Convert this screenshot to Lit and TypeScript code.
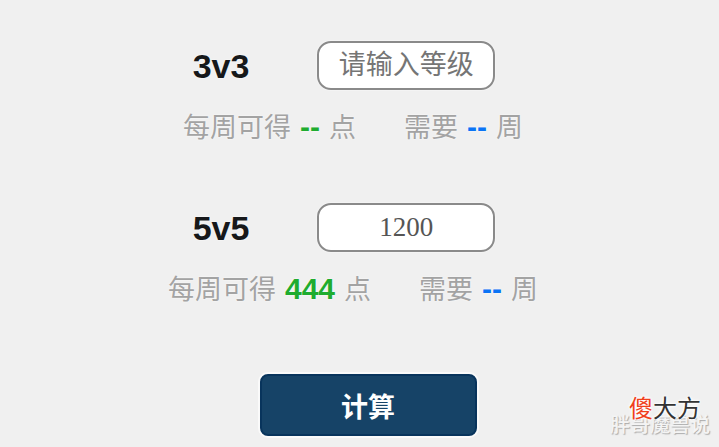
import { LitElement, html, css } from "lit";
import { customElement, property, state } from "lit/decorators.js";

@customElement("bracket-form")
class BracketForm extends LitElement {
  @property() name = "";
  @property() rating = "";
  @property() points = "--";
  @property() weeks = "--";

  static styles = css`
    :host {
      display: block;
    }
    .field {
      display: flex;
      justify-content: center;
      align-items: center;
      gap: 68px;
      padding-right: 18px;
    }
    .name {
      font-size: 34px;
      line-height: 48px;
      font-weight: 700;
      color: #16181a;
      text-shadow: 0 0 2px #fff;
    }
    .rating {
      box-sizing: border-box;
      width: 178px;
      height: 49px;
      padding: 0 8px;
      border: 2px solid #8a8a8a;
      border-radius: 14px;
      background: #fff;
      box-shadow: 0 0 2px #fff;
      color: #555;
      text-align: center;
      font-family: "Liberation Serif", "Noto Sans CJK SC", serif;
      font-size: 27px;
      outline: none;
    }
    .rating::placeholder {
      color: #757575;
      opacity: 1;
    }
    .result {
      display: flex;
      justify-content: center;
      gap: 48px;
      margin: 17px 0 0;
      font-size: 27px;
      line-height: 40px;
      color: #a3a3a3;
      text-shadow: 0 0 2px #fff;
    }
    .item {
      display: flex;
      align-items: baseline;
      gap: 9px;
    }
    .value {
      font-size: 30px;
      font-weight: 700;
    }
    .points {
      color: #1fac2f;
    }
    .weeks {
      color: #0b74f5;
    }
  `;

  render() {
    return html`
      <div class="field">
        <label class="name" for="rating">${this.name}</label>
        <input class="rating" id="rating" type="text" inputmode="numeric" placeholder="请输入等级" .value=${this.rating} />
      </div>
      <p class="result">
        <span class="item">每周可得<b class="value points">${this.points}</b>点</span>
        <span class="item">需要<b class="value weeks">${this.weeks}</b>周</span>
      </p>
    `;
  }
}

@customElement("app-root")
class AppRoot extends LitElement {
  @state() brackets = [
    { name: "3v3", rating: "", points: "--", weeks: "--" },
    { name: "5v5", rating: "1200", points: "444", weeks: "--" },
  ];

  static styles = css`
    :host {
      display: block;
      position: relative;
      box-sizing: border-box;
      min-height: 100vh;
      background: #f0f0f0;
      font-family: "Liberation Sans", "Noto Sans CJK SC", sans-serif;
    }
    .calculator {
      display: flex;
      flex-direction: column;
      gap: 55px;
      padding: 41px 13px 11px 0;
    }
    .submit {
      align-self: center;
      box-sizing: border-box;
      width: 217px;
      height: 62px;
      margin: 9px 0 0 30px;
      border: 2px solid #08345c;
      border-radius: 8px;
      background: #164367;
      box-shadow: 0 0 0 2px #fafafa;
      color: #fff;
      font: inherit;
      font-size: 27px;
      font-weight: 700;
    }
    .marks {
      position: absolute;
      right: 9px;
      bottom: 8px;
      display: grid;
      white-space: nowrap;
    }
    .author,
    .site {
      grid-area: 1 / 1;
    }
    .author {
      align-self: end;
      font-size: 20px;
      line-height: 28px;
      font-weight: 500;
      color: #f4f4f4;
      text-shadow: 1px 1px 1px #aaa;
    }
    .site {
      justify-self: end;
      padding: 0 9px 14px 0;
      font-size: 24px;
      line-height: 32px;
      color: #333;
      text-shadow: 0 0 2px #fff, 0 0 2px #fff, 0 0 3px #fff, 0 0 4px #fff;
    }
    .accent {
      color: #f0401c;
    }
  `;

  render() {
    return html`
      <main class="calculator">
        ${this.brackets.map(
          (b) => html`<bracket-form .name=${b.name} .rating=${b.rating} .points=${b.points} .weeks=${b.weeks}></bracket-form>`
        )}
        <button class="submit" type="button">计算</button>
      </main>
      <div class="marks">
        <span class="author">胖哥魔兽说</span>
        <span class="site"><span class="accent">傻</span>大方</span>
      </div>
    `;
  }
}
